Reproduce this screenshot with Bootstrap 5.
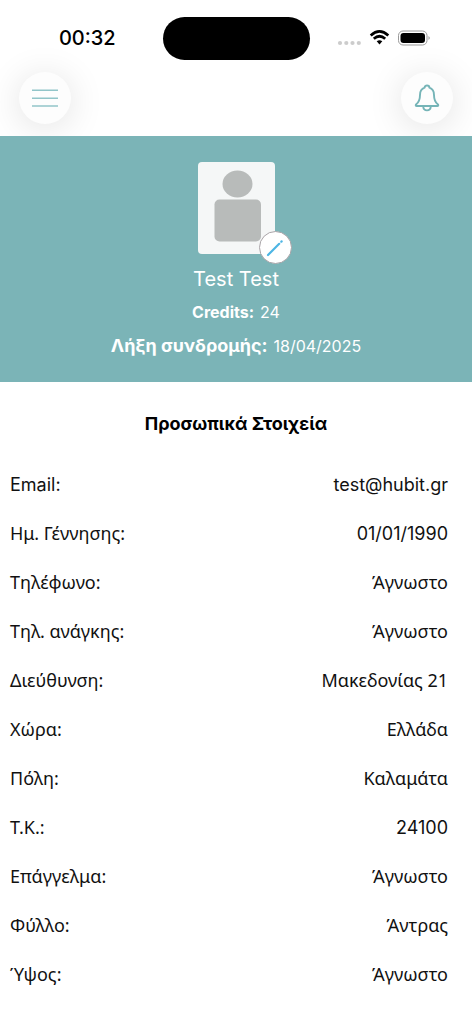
<!DOCTYPE html>
<html lang="el">
<head>
<meta charset="utf-8">
<meta name="viewport" content="width=device-width, initial-scale=1">
<title>Προφίλ</title>
<link href="https://cdn.jsdelivr.net/npm/bootstrap@5.3.0/dist/css/bootstrap.min.css" rel="stylesheet">
<style>
  :root { --brand: #7bb4b7; }
  body { font-family: Inter, "Noto Sans", sans-serif; color: #111; background: #fff; font-size: 18px; line-height: 24px; }
  .status-bar { height: 72px; padding-top: 4px; }
  .clock { font-size: 20px; font-weight: 500; color: #000; margin-left: 12px; }
  .island { width: 147px; height: 43px; background: #000; }
  .status-side { flex: 1 1 0; }
  .status-icons { margin-left: 26px; }
  .toolbar { height: 64px; padding: 0 19px; }
  .round-btn { width: 52px; height: 52px; background: #fdfdfd; box-shadow: 0 4px 36px rgba(0, 0, 0, .12); }
  .profile { background: var(--brand); color: #fff; padding: 26px 16px 19px; }
  .avatar { width: 77px; height: 92px; background: #f5f7f7; border-radius: 4px; }
  .edit-btn { width: 33px; height: 33px; right: -17px; bottom: -10px; background: #fff; border: 1px solid #a9a4a8; }
  .person-name { font-size: 20px; line-height: 26px; font-weight: 400; margin: 12px 0 4px; }
  .meta { font-size: 16px; line-height: 33px; font-weight: 400; }
  .meta strong { font-weight: 700; margin-right: 6px; }
  .meta .expiry { font-size: 18px; }
  .section-title { font-size: 18px; line-height: 24px; font-weight: 700; color: #000; margin: 30px 0 24px; }
  .info-row { line-height: 49px; padding: 0 24px 0 10px; font-family: "Noto Sans", sans-serif; }
  .latin { font-family: Inter, sans-serif; }
</style>
</head>
<body>
<header class="overflow-hidden">
  <div class="status-bar d-flex align-items-center">
    <div class="status-side text-center"><span class="clock">00:32</span></div>
    <div class="island rounded-pill"></div>
    <div class="status-side d-flex">
      <svg class="status-icons" width="96" height="20" viewBox="0 0 96 20" aria-label="Wi-Fi, μπαταρία" role="img">
        <g fill="#ccc"><circle cx="4" cy="15" r="2.1"/><circle cx="10.300" cy="15" r="2.1"/><circle cx="16.500" cy="15" r="2.1"/><circle cx="22.800" cy="15" r="2.1"/></g>
        <g fill="none" stroke="#000" stroke-width="2.700"><path d="M34.700 7.400Q43.500-.6 52.300 7.400"/><path d="M37.800 10.800Q43.500 5.700 49.200 10.800"/></g>
        <path d="M40.700 13.300Q43.500 11.200 46.300 13.300L43.500 16.500Z"/>
        <rect x="62.500" y="3" width="28.500" height="14" rx="4.500" fill="none" stroke="#999"/>
        <rect x="64.500" y="5" width="24.500" height="10" rx="3"/>
        <path d="M92.500 8Q95 10 92.500 12Z" fill="#999"/>
      </svg>
    </div>
  </div>
  <nav class="toolbar d-flex justify-content-between" aria-label="Κύριο μενού">
    <button class="round-btn btn border-0 rounded-circle p-0 d-flex align-items-center justify-content-center" type="button" aria-label="Μενού">
      <svg width="26" height="18" viewBox="0 0 26 18" stroke="#92c5c9" stroke-width="1.400"><path d="M0 1.300H26M0 9.200H26M0 17H26"/></svg>
    </button>
    <button class="round-btn btn border-0 rounded-circle p-0 d-flex align-items-center justify-content-center" type="button" aria-label="Ειδοποιήσεις">
      <svg width="26" height="28" viewBox="0 0 26 28" fill="none" stroke="#75b4b7" stroke-width="1.900" stroke-linejoin="round" stroke-linecap="round">
        <path d="M10.600 3.700C10.600.8 15.400.8 15.400 3.700C18.700 4.800 20 7.500 20 11C20 16.500 21.300 18.500 24 20.500Q24.800 22 23.300 22H2.700Q1.200 22 2 20.500C4.700 18.500 6 16.500 6 11C6 7.500 7.300 4.800 10.600 3.700Z"/>
        <path d="M9.200 22.500C9.600 27.700 16.400 27.700 16.800 22.500"/>
      </svg>
    </button>
  </nav>
</header>
<main>
  <section class="profile text-center">
    <div class="avatar position-relative mx-auto">
      <svg class="d-block" width="77" height="92" viewBox="0 0 77 92" fill="#b8bbba" role="img" aria-label="Φωτογραφία προφίλ"><ellipse cx="39.500" cy="22" rx="15" ry="13.500"/><rect x="16.500" y="37.500" width="46.500" height="42" rx="5"/></svg>
      <button class="edit-btn btn rounded-circle p-0 position-absolute d-flex align-items-center justify-content-center" type="button" aria-label="Επεξεργασία">
        <svg width="18" height="18" viewBox="0 0 18 18" stroke="#4db5e4" stroke-width="2.200" stroke-linecap="round"><path d="M2 16L13.200 4.800M15.300 2.700L15.600 2.400"/></svg>
      </button>
    </div>
    <h1 class="person-name">Test Test</h1>
    <p class="meta mb-0"><strong>Credits:</strong>24</p>
    <p class="meta mb-0"><strong class="expiry">Λήξη συνδρομής:</strong>18/04/2025</p>
  </section>
  <section>
    <h2 class="section-title text-center">Προσωπικά Στοιχεία</h2>
    <dl class="mb-4">
      <div class="info-row d-flex justify-content-between"><dt class="fw-normal latin">Email:</dt><dd class="mb-0 latin">test@hubit.gr</dd></div>
      <div class="info-row d-flex justify-content-between"><dt class="fw-normal">Ημ. Γέννησης:</dt><dd class="mb-0 latin">01/01/1990</dd></div>
      <div class="info-row d-flex justify-content-between"><dt class="fw-normal">Τηλέφωνο:</dt><dd class="mb-0">Άγνωστο</dd></div>
      <div class="info-row d-flex justify-content-between"><dt class="fw-normal">Τηλ. ανάγκης:</dt><dd class="mb-0">Άγνωστο</dd></div>
      <div class="info-row d-flex justify-content-between"><dt class="fw-normal">Διεύθυνση:</dt><dd class="mb-0">Μακεδονίας 21</dd></div>
      <div class="info-row d-flex justify-content-between"><dt class="fw-normal">Χώρα:</dt><dd class="mb-0">Ελλάδα</dd></div>
      <div class="info-row d-flex justify-content-between"><dt class="fw-normal">Πόλη:</dt><dd class="mb-0">Καλαμάτα</dd></div>
      <div class="info-row d-flex justify-content-between"><dt class="fw-normal">Τ.Κ.:</dt><dd class="mb-0 latin">24100</dd></div>
      <div class="info-row d-flex justify-content-between"><dt class="fw-normal">Επάγγελμα:</dt><dd class="mb-0">Άγνωστο</dd></div>
      <div class="info-row d-flex justify-content-between"><dt class="fw-normal">Φύλλο:</dt><dd class="mb-0">Άντρας</dd></div>
      <div class="info-row d-flex justify-content-between"><dt class="fw-normal">Ύψος:</dt><dd class="mb-0">Άγνωστο</dd></div>
    </dl>
  </section>
</main>
<script src="https://cdn.jsdelivr.net/npm/bootstrap@5.3.0/dist/js/bootstrap.bundle.min.js"></script>
</body>
</html>
